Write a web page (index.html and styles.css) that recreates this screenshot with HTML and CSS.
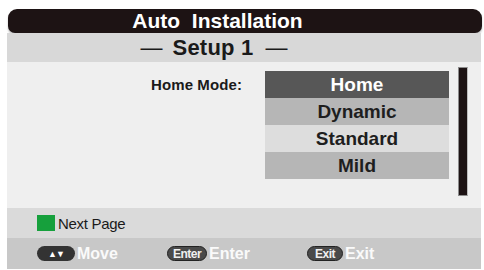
FILE: index.html
```html
<!DOCTYPE html>
<html>
<head>
<meta charset="utf-8">
<link rel="stylesheet" href="styles.css">
</head>
<body>
<div class="screen">
  <div class="titlebar"><span class="title">Auto&nbsp; Installation</span></div>
  <div class="subheader"><span class="dash">—</span><span class="setup">Setup 1</span><span class="dash">—</span></div>
  <div class="body">
    <div class="label">Home Mode:</div>
    <ul class="options">
      <li class="opt selected">Home</li>
      <li class="opt mid">Dynamic</li>
      <li class="opt light">Standard</li>
      <li class="opt mid">Mild</li>
    </ul>
    <div class="scrollbar"></div>
  </div>
  <div class="hint"><span class="green"></span><span class="hint-text">Next Page</span></div>
  <div class="keys">
    <div class="key key-move"><span class="pill pill-arrows">▲▼</span><span class="key-text">Move</span></div>
    <div class="key key-enter"><span class="pill pill-word">Enter</span><span class="key-text">Enter</span></div>
    <div class="key key-exit"><span class="pill pill-word pill-exit">Exit</span><span class="key-text">Exit</span></div>
  </div>
</div>
</body>
</html>
```
FILE: styles.css
```css
html, body {
  margin: 0;
  padding: 0;
  background: #ffffff;
}
body {
  font-family: "Liberation Sans", Arial, sans-serif;
  width: 484px;
  height: 270px;
  overflow: hidden;
}
.screen {
  margin: 9px 0 0 7px;
  width: 474px;
  display: flex;
  flex-direction: column;
}
.titlebar {
  height: 24px;
  margin: 0 -1px 0 1px;
  background: #1d1314;
  border-radius: 9px 9px 7px 7px;
  box-shadow: 0 2px 2px rgba(0,0,0,0.25);
  display: flex;
  align-items: center;
  justify-content: center;
  padding-right: 55px;
  box-sizing: border-box;
}
.title {
  color: #ffffff;
  font-weight: bold;
  font-size: 21px;
  letter-spacing: 0;
  line-height: 24px;
}
.subheader {
  height: 29px;
  background: #d8d8d8;
  display: flex;
  align-items: center;
  justify-content: center;
  padding-right: 60px;
  box-sizing: border-box;
  color: #1a1a1a;
}
.dash {
  font-size: 22px;
  font-weight: normal;
  line-height: 29px;
}
.setup {
  font-size: 22px;
  font-weight: bold;
  letter-spacing: 0.2px;
  margin: 0 12px 0 10px;
  line-height: 29px;
}
.body {
  height: 146px;
  background: #efefef;
  display: flex;
  align-items: flex-start;
  padding: 5px 0 0 144px;
  box-sizing: border-box;
}
.label {
  width: 114px;
  margin-top: 4px;
  font-size: 15px;
  font-weight: bold;
  letter-spacing: 0.1px;
  line-height: 27px;
  color: #1a1a1a;
}
.options {
  list-style: none;
  margin: 4px 0 0 0;
  padding: 0;
  width: 184px;
}
.opt {
  height: 27px;
  line-height: 28px;
  text-align: center;
  font-size: 19px;
  font-weight: bold;
  letter-spacing: 0;
  color: #1e1e1e;
}
.opt.selected {
  background: #575757;
  color: #ffffff;
}
.opt.mid {
  background: #b6b6b6;
}
.opt.light {
  background: #dddddd;
}
.scrollbar {
  width: 8px;
  height: 127px;
  margin-left: 9px;
  background: #1d1314;
  border: 1px solid #8c8c8c;
  border-right-color: #bdbdbd;
}
.hint {
  height: 30px;
  background: #dadada;
  display: flex;
  align-items: center;
  padding-left: 30px;
  box-sizing: border-box;
}
.green {
  width: 18px;
  height: 16px;
  background: #16a03c;
  margin-right: 3px;
}
.hint-text {
  font-size: 15px;
  color: #1a1a1a;
  letter-spacing: -0.3px;
}
.keys {
  height: 31px;
  background: #c8c8c8;
  display: flex;
  align-items: center;
  padding-left: 30px;
  box-sizing: border-box;
}
.key {
  display: flex;
  align-items: center;
}
.key-move { width: 130px; }
.key-enter { width: 140px; }
.pill {
  background: #333333;
  color: #ffffff;
  border-radius: 8px;
  height: 15px;
  display: flex;
  align-items: center;
  justify-content: center;
  box-sizing: border-box;
}
.pill-arrows {
  width: 38px;
  font-size: 9px;
  letter-spacing: -1px;
}
.pill-word {
  width: 40px;
  font-size: 12px;
  font-weight: bold;
  letter-spacing: -0.5px;
  border: 1px solid #222;
  background: #4a4a4a;
  color: #f0f0f0;
}
.pill-exit {
  width: 36px;
}
.key-text {
  margin-left: 2px;
  color: #fafafa;
  font-size: 16px;
  font-weight: bold;
}
```
